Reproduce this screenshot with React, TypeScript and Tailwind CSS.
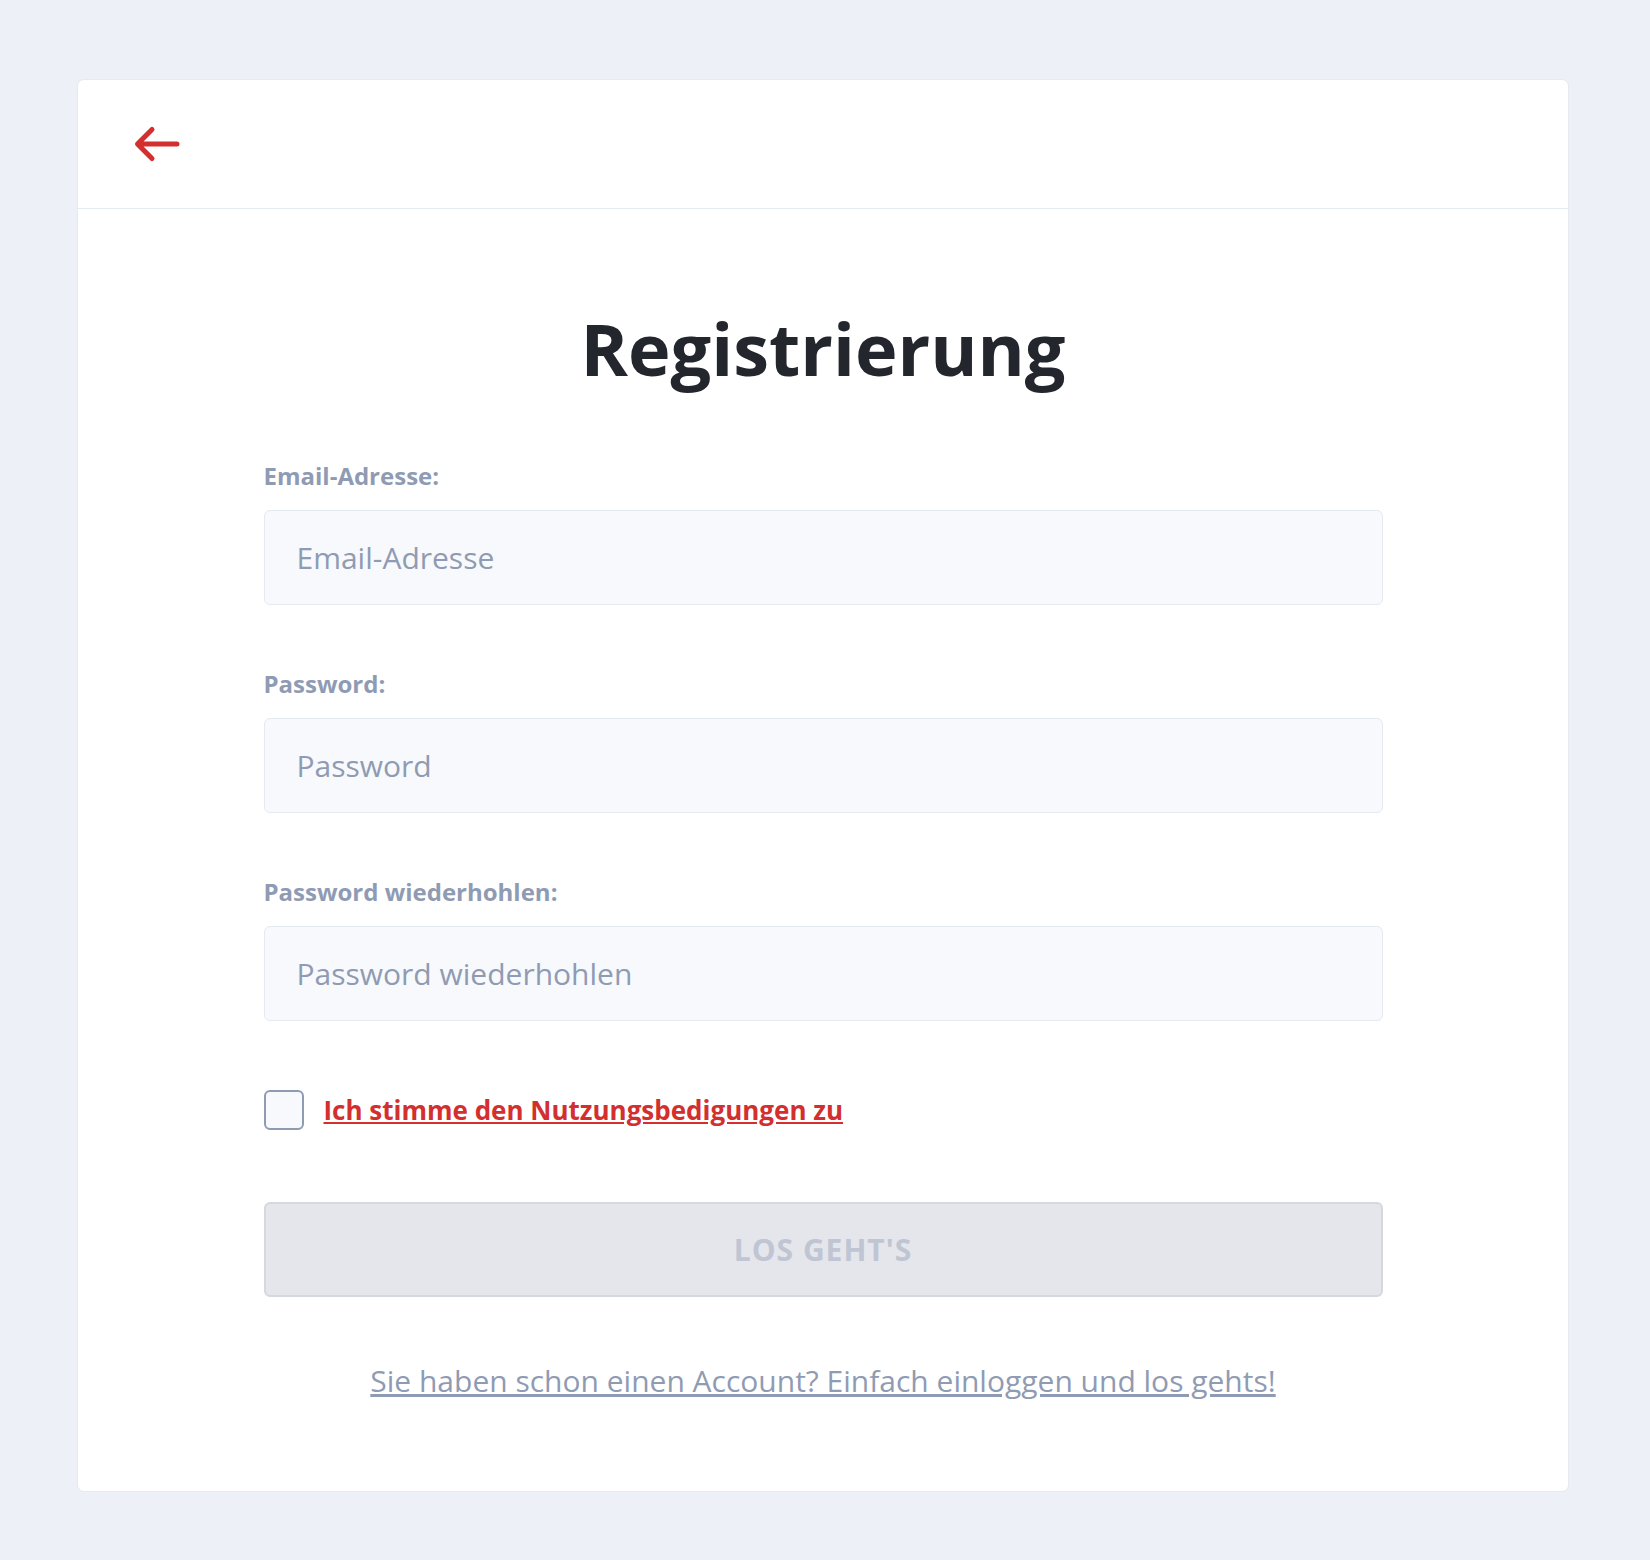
import React from "react";

const fields = [
  { label: "Email-Adresse:", placeholder: "Email-Adresse", type: "email" },
  { label: "Password:", placeholder: "Password", type: "password" },
  { label: "Password wiederhohlen:", placeholder: "Password wiederhohlen", type: "password" }
];

function BackArrow() {
  return (
    <svg width="50" height="44" viewBox="0 0 50 44" fill="none">
      <path
        d="M45 22H6M20 7.5L5.5 22L20 36.5"
        stroke="#d32f2f"
        strokeWidth="5"
        strokeLinecap="round"
        strokeLinejoin="round"
      />
    </svg>
  );
}

export default function App() {
  return (
    <div className="min-h-screen bg-[#edf1f7] pt-[79px] pb-[68px] font-['Open_Sans',sans-serif]">
      <div className="ml-[77px] w-[1492px] rounded-[7px] border border-[#e4e9f2] bg-white">
        <div className="flex h-[129px] items-center border-b border-[#e4e9f2] pl-[54px]">
          <button type="button" aria-label="Zurück">
            <BackArrow />
          </button>
        </div>

        <div className="mx-auto w-[1119px] pt-[95px] pb-[92px]">
          <h1 className="text-center text-[72px] leading-[88px] font-bold text-[#23272d]">
            Registrierung
          </h1>

          <form className="mt-[68px]">
            {fields.map((field, i) => (
              <div key={field.label} className={i > 0 ? "mt-[63px]" : ""}>
                <label className="block text-[24px] leading-[32px] font-bold text-[#8f9bb3]">
                  {field.label}
                </label>
                <input
                  type={field.type}
                  placeholder={field.placeholder}
                  className="mt-[18px] block h-[95px] w-full rounded-[6px] border border-[#e4e9f2] bg-[#f7f9fc] px-[32px] text-[30px] text-[#222b45] outline-none placeholder:text-[#8f9bb3]"
                />
              </div>
            ))}

            <div className="mt-[69px] flex items-center gap-[20px]">
              <span className="block h-[40px] w-[40px] rounded-[6px] border-2 border-[#8f9bb3] bg-[#f7f9fc]" />
              <a href="#" className="text-[26px] leading-[40px] font-bold text-[#d32f2f] underline">
                Ich stimme den Nutzungsbedigungen zu
              </a>
            </div>

            <button
              type="button"
              disabled
              className="mt-[72px] block h-[95px] w-full rounded-[6px] border-2 border-[#d5d8e1] bg-[#e4e6ec] text-[30px] font-bold tracking-[1px] text-[#bfc5d3]"
            >
              LOS GEHT'S
            </button>
          </form>

          <p className="mt-[66px] text-center text-[30px] leading-[36px]">
            <a href="#" className="text-[#8f9bb3] underline">
              Sie haben schon einen Account? Einfach einloggen und los gehts!
            </a>
          </p>
        </div>
      </div>
    </div>
  );
}
